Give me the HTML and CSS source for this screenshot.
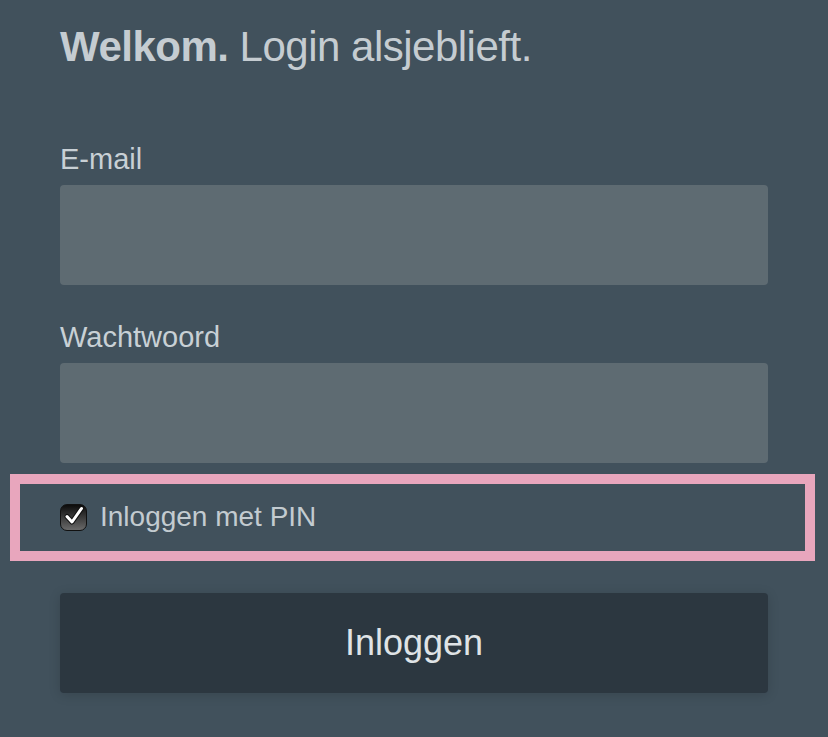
FILE: index.html
```html
<!DOCTYPE html>
<html lang="nl">
<head>
    <meta charset="UTF-8">
    <meta name="viewport" content="width=device-width, initial-scale=1.0">
    <title>Login</title>
    <link rel="stylesheet" href="styles.css">
</head>
<body>

<div class="login">
    <h1><strong>Welkom.</strong> Login alsjeblieft.</h1>

    <form class="login-form">
        <label class="field-label" for="email">E-mail</label>
        <input class="field" type="email" id="email">

        <label class="field-label" for="password">Wachtwoord</label>
        <input class="field" type="password" id="password">

        <div class="pin-row">
            <label class="pin-label">
                <span class="check">
                    <svg width="22" height="22" viewBox="0 0 22 22">
                        <path d="M4 11.5 L9 17 L18.5 3.5" fill="none" stroke="#111" stroke-width="5" stroke-linecap="round" stroke-linejoin="round"/>
                        <path d="M4 11.5 L9 17 L18.5 3.5" fill="none" stroke="#fff" stroke-width="3" stroke-linecap="round" stroke-linejoin="round"/>
                    </svg>
                </span>
                Inloggen met PIN
            </label>
        </div>

        <button class="submit" type="button">Inloggen</button>
    </form>
</div>

</body>
</html>
```

FILE: styles.css
```css
body {
    font-family: "Liberation Sans", Arial, sans-serif;
    background-color: #41515c;
    margin: 0;
    padding: 0;
}
.login {
    padding: 23px 60px 40px;
}
h1 {
    margin: 0;
    font-size: 42px;
    font-weight: 300;
    color: #c5ccd1;
    letter-spacing: -0.5px;
}
h1 strong {
    font-weight: bold;
}
.login-form {
    display: flex;
    flex-direction: column;
    margin-top: 72px;
}
.field-label {
    font-size: 29px;
    color: #c8d0d5;
    margin-bottom: 9px;
}
.field {
    height: 100px;
    box-sizing: border-box;
    border: none;
    border-radius: 4px;
    background-color: #5e6b72;
    margin-bottom: 36px;
}
.field:last-of-type {
    margin-bottom: 11px;
}
.pin-row {
    margin: 0 -47px 0 -50px;
    border: 10px solid #e8a6bd;
    padding: 17px 40px 18px;
}
.pin-label {
    display: flex;
    align-items: center;
    gap: 13px;
    font-size: 28px;
    color: #c3cbd0;
}
.check {
    width: 27px;
    height: 27px;
    box-sizing: border-box;
    border: 1px solid #111;
    border-radius: 7px;
    background: linear-gradient(#0c0c0c, #6a6a6a);
    display: flex;
    align-items: center;
    justify-content: center;
}
.check svg {
    margin-top: -3px;
}
.submit {
    margin-top: 32px;
    height: 100px;
    border: none;
    border-radius: 4px;
    background-color: #2c3740;
    color: #dfe3e6;
    font-family: inherit;
    font-size: 36px;
    box-shadow: 0 2px 12px rgba(0, 0, 0, 0.15);
}
```
